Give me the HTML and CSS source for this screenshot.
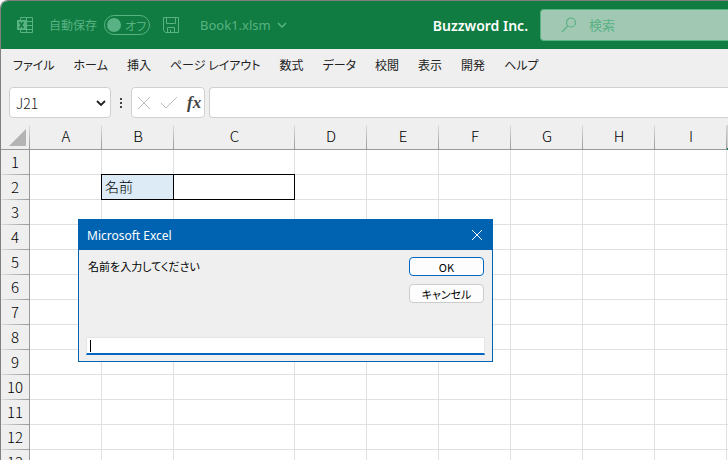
FILE: index.html
```html
<!DOCTYPE html>
<html lang="ja">
<head>
  <meta charset="UTF-8">
  <meta name="viewport" content="width=device-width, initial-scale=1.0">
  <title>Book1.xlsm</title>
  <link rel="stylesheet" href="styles.css">
</head>
<body>
  <div class="window">
    <header class="titlebar">
      <svg class="app-icon" width="18" height="18" viewBox="0 0 18 18" fill="none" stroke="currentColor">
        <path d="M4.500 4V1.500H16.500V16.500H4.500V14M10.500 1.500V16.500M4.500 5.500H16.500M10.500 9.500H16.500M4.500 13.500H16.500" />
        <rect x="1" y="4" width="9" height="10" fill="currentColor" stroke="none" />
        <path d="M3.500 6L7.500 12M7.500 6L3.500 12" stroke="#107c41" stroke-width="1.600" />
      </svg>
      <span class="autosave">自動保存</span>
      <button class="toggle"><span class="knob"></span>オフ</button>
      <button class="save" aria-label="上書き保存">
        <svg width="18" height="18" viewBox="0 0 18 18" fill="none" stroke="currentColor">
          <path d="M1.500 1.500H16.500V16.500H3.500L1.500 14.500ZM4.500 1.500V7.500H13.500V1.500M5.500 16.500V11.500H12.500V16.500M8.500 16.500V14" />
        </svg>
      </button>
      <button class="file-name">Book1.xlsm
        <svg width="10" height="6" viewBox="0 0 10 6" fill="none" stroke="currentColor" stroke-width="1.500">
          <path d="M1 1L5 5L9 1" />
        </svg>
      </button>
      <span class="company">Buzzword Inc.</span>
      <label class="search">
        <svg width="16" height="16" viewBox="0 0 16 16" fill="none" stroke="currentColor" stroke-width="1.200">
          <circle cx="10" cy="5.500" r="4.500" />
          <path d="M6.800 8.800L1 15" />
        </svg>
        <input type="text" placeholder="検索" aria-label="検索">
      </label>
    </header>

    <nav class="menu">
      <button>ファイル</button>
      <button>ホーム</button>
      <button>挿入</button>
      <button>ページ レイアウト</button>
      <button>数式</button>
      <button>データ</button>
      <button>校閲</button>
      <button>表示</button>
      <button>開発</button>
      <button>ヘルプ</button>
    </nav>

    <div class="formula-bar">
      <div class="name-box">
        <select aria-label="名前ボックス">
          <option>J21</option>
        </select>
        <svg width="10" height="6" viewBox="0 0 10 6" fill="none" stroke="#222" stroke-width="1.800">
          <path d="M1 1L5 5L9 1" />
        </svg>
      </div>
      <svg class="dots" width="4" height="12" viewBox="0 0 4 12" fill="#444">
        <path d="M1 1h2v2H1zM1 5h2v2H1zM1 9h2v2H1z" />
      </svg>
      <div class="formula-tools">
        <button aria-label="キャンセル">
          <svg width="14" height="14" viewBox="0 0 14 14" fill="none" stroke="#bbb">
            <path d="M1 1L13 13M13 1L1 13" />
          </svg>
        </button>
        <button aria-label="入力">
          <svg width="18" height="14" viewBox="0 0 18 14" fill="none" stroke="#bbb">
            <path d="M1 7L6 12L17 1" />
          </svg>
        </button>
        <button class="fx" aria-label="関数の挿入">fx</button>
      </div>
      <input class="formula" type="text" aria-label="数式バー">
    </div>

    <main class="sheet">
      <table>
        <colgroup>
          <col class="row-head">
          <col><col>
          <col class="wide">
          <col><col><col><col><col><col><col>
        </colgroup>
        <thead>
          <tr>
            <th class="corner"><svg width="17" height="17" viewBox="0 0 17 17" fill="#b4b4b4"><path d="M17 0V17H0Z" /></svg></th>
            <th>A</th><th>B</th><th>C</th><th>D</th><th>E</th><th>F</th><th>G</th><th>H</th><th>I</th><th class="selected"></th>
          </tr>
        </thead>
        <tbody>
          <tr><th>1</th><td></td><td></td><td></td><td></td><td></td><td></td><td></td><td></td><td></td><td></td></tr>
          <tr><th>2</th><td></td><td class="boxed label">名前</td><td class="boxed"></td><td></td><td></td><td></td><td></td><td></td><td></td><td></td></tr>
          <tr><th>3</th><td></td><td></td><td></td><td></td><td></td><td></td><td></td><td></td><td></td><td></td></tr>
          <tr><th>4</th><td></td><td></td><td></td><td></td><td></td><td></td><td></td><td></td><td></td><td></td></tr>
          <tr><th>5</th><td></td><td></td><td></td><td></td><td></td><td></td><td></td><td></td><td></td><td></td></tr>
          <tr><th>6</th><td></td><td></td><td></td><td></td><td></td><td></td><td></td><td></td><td></td><td></td></tr>
          <tr><th>7</th><td></td><td></td><td></td><td></td><td></td><td></td><td></td><td></td><td></td><td></td></tr>
          <tr><th>8</th><td></td><td></td><td></td><td></td><td></td><td></td><td></td><td></td><td></td><td></td></tr>
          <tr><th>9</th><td></td><td></td><td></td><td></td><td></td><td></td><td></td><td></td><td></td><td></td></tr>
          <tr><th>10</th><td></td><td></td><td></td><td></td><td></td><td></td><td></td><td></td><td></td><td></td></tr>
          <tr><th>11</th><td></td><td></td><td></td><td></td><td></td><td></td><td></td><td></td><td></td><td></td></tr>
          <tr><th>12</th><td></td><td></td><td></td><td></td><td></td><td></td><td></td><td></td><td></td><td></td></tr>
          <tr><th>13</th><td></td><td></td><td></td><td></td><td></td><td></td><td></td><td></td><td></td><td></td></tr>
        </tbody>
      </table>
    </main>

    <form class="dialog" role="dialog" aria-label="Microsoft Excel">
      <div class="dialog-title">
        <span>Microsoft Excel</span>
        <button type="button" aria-label="閉じる">
          <svg width="12" height="12" viewBox="0 0 12 12" fill="none" stroke="#fff">
            <path d="M1 1L11 11M11 1L1 11" />
          </svg>
        </button>
      </div>
      <div class="dialog-body">
        <div class="dialog-top">
          <label for="answer">名前を入力してください</label>
          <div class="dialog-buttons">
            <button type="button" class="default">OK</button>
            <button type="button">キャンセル</button>
          </div>
        </div>
        <input id="answer" type="text">
      </div>
    </form>
  </div>
</body>
</html>
```

FILE: styles.css
```css
* {
  box-sizing: border-box;
}

body {
  margin: 0;
  height: 100vh;
  overflow: hidden;
  background: #fff;
  font-family: "Noto Sans", "Noto Sans CJK JP", sans-serif;
  font-size: 13px;
  color: #222;
}

button, input, select {
  margin: 0;
  padding: 0;
  border: none;
  background: none;
  font: inherit;
  color: inherit;
  outline: none;
}

svg {
  display: block;
  flex: none;
}

.window {
  position: relative;
  display: flex;
  flex-direction: column;
  height: 100vh;
  overflow: hidden;
  border-top: 1px solid #808080;
  border-left: 1px solid #808080;
  border-top-left-radius: 8px;
  background: #efefef;
}

/* title bar */
.titlebar {
  display: flex;
  flex: none;
  align-items: center;
  height: 48px;
  padding-left: 15px;
  background: #107c41;
  color: #58b283;
}

.autosave {
  margin-left: 15px;
  font-size: 12px;
}

.toggle {
  display: flex;
  align-items: center;
  gap: 4px;
  width: 46px;
  height: 20px;
  margin-left: 7px;
  padding-left: 2px;
  border: 1px solid #58b283;
  border-radius: 10px;
  font-family: "Noto Sans CJK JP", sans-serif;
  font-size: 12px;
  font-feature-settings: "palt";
}

.knob {
  width: 14px;
  height: 14px;
  border-radius: 50%;
  background: #58b283;
}

.save {
  margin-left: 12px;
}

.file-name {
  display: flex;
  align-items: center;
  gap: 6px;
  margin-left: 20px;
}

.company {
  margin-left: auto;
  font-weight: 600;
  font-size: 14px;
  color: #fff;
}

.search {
  display: flex;
  align-items: center;
  gap: 12px;
  width: 188px;
  height: 32px;
  margin-left: 12px;
  padding-left: 20px;
  border: 1px solid #58b283;
  border-right: none;
  border-radius: 4px 0 0 4px;
  background: #a0c8b3;
}

.search input {
  flex: 1;
  min-width: 0;
}

.search input::placeholder {
  color: #58b283;
  opacity: 1;
}

/* ribbon tabs */
.menu {
  display: flex;
  flex: none;
  align-items: center;
  gap: 19px;
  height: 33px;
  padding: 0 0 2px 12px;
  font-family: "Noto Sans CJK JP", sans-serif;
  font-size: 12px;
  font-feature-settings: "palt";
}

.menu button {
  white-space: nowrap;
}

/* formula bar */
.formula-bar {
  display: flex;
  flex: none;
  align-items: center;
  padding: 5px 0 7px 8px;
}

.name-box {
  display: grid;
  align-items: center;
  width: 102px;
  height: 31px;
  border: 1px solid #d0d0d0;
  border-radius: 4px;
  background: #fff;
}

.name-box select {
  grid-area: 1 / 1;
  height: 29px;
  padding-left: 6px;
  appearance: none;
  font-family: "Noto Sans CJK JP", sans-serif;
  font-weight: 300;
  font-size: 14px;
}

.name-box svg {
  grid-area: 1 / 1;
  justify-self: end;
  margin-right: 4px;
  pointer-events: none;
}

.dots {
  margin: 0 8px;
}

.formula-tools {
  display: flex;
  align-items: center;
  gap: 9px;
  width: 74px;
  height: 31px;
  padding-left: 5px;
  border: 1px solid #d0d0d0;
  border-radius: 4px;
  background: #fff;
}

.fx {
  font-family: "Liberation Serif", serif;
  font-style: italic;
  font-weight: bold;
  font-size: 17px;
  line-height: 20px;
  color: #444;
}

.formula {
  flex: 1;
  min-width: 0;
  height: 31px;
  margin-left: 4px;
  padding: 0 8px;
  border: 1px solid #d0d0d0;
  border-right: none;
  border-radius: 4px 0 0 4px;
  background: #fff;
}

/* sheet */
.sheet {
  flex: 1;
  min-height: 0;
  overflow: hidden;
  background: #fff;
}

table {
  width: 798px;
  table-layout: fixed;
  border-collapse: separate;
  border-spacing: 0;
  font-family: "Noto Sans CJK JP", sans-serif;
  font-weight: 300;
  font-size: 15px;
  line-height: 22px;
  color: #000;
}

col {
  width: 72px;
}

col.row-head {
  width: 29px;
}

col.wide {
  width: 121px;
}

th, td {
  height: 25px;
  padding: 0 0 2px;
}

th {
  font-weight: inherit;
  text-align: center;
}

thead th {
  border-bottom: 1px solid #999;
  background: linear-gradient(#ddd, #999) right / 1px 100% no-repeat #efefef;
}

thead th.selected {
  border-bottom: 2px solid #107c41;
  background: #d2d2d2;
}

.corner svg {
  margin: 2px 0 0 8px;
}

tbody th {
  border-right: 1px solid #999;
  background: linear-gradient(to right, #ddd, #999) bottom / 100% 1px no-repeat #efefef;
}

td {
  border-right: 1px solid #e0e0e0;
  border-bottom: 1px solid #e0e0e0;
}

td.boxed {
  position: relative;
  border-color: #000;
  box-shadow: -1px -1px 0 #000, 0 -1px 0 #000, -1px 0 0 #000;
  background: #fff;
}

td.label {
  padding-left: 3px;
  background: #ddebf7;
  font-size: 14px;
}

/* input box */
.dialog {
  position: absolute;
  top: 218px;
  left: 77px;
  width: 415px;
  border: 1px solid #0063b1;
  background: #efefef;
  font-size: 11px;
  color: #000;
}

.dialog-title {
  display: flex;
  align-items: center;
  justify-content: space-between;
  height: 30px;
  padding: 0 9px 0 8px;
  background: #0063b1;
  font-size: 12px;
  color: #fff;
}

.dialog-body {
  padding: 7px 7px 6px;
}

.dialog-top {
  display: flex;
  justify-content: space-between;
  height: 80px;
  padding: 0 1px 0 2px;
  font-family: "Noto Sans CJK JP", sans-serif;
  font-feature-settings: "palt";
}

.dialog-top label {
  line-height: 18px;
}

.dialog-buttons {
  display: flex;
  flex-direction: column;
  gap: 8px;
}

.dialog-buttons button {
  width: 75px;
  height: 19px;
  border: 1px solid #ccc;
  border-radius: 4px;
  background: #fdfdfd;
  line-height: 16px;
}

.dialog-buttons .default {
  border-color: #0067c0;
}

.dialog-body input {
  display: block;
  width: 100%;
  height: 18px;
  padding: 0 4px;
  border: 1px solid #e5e5e5;
  border-bottom: 2px solid #0067c0;
  /* caret */
  background: linear-gradient(#000, #000) 3px center / 1px 12px no-repeat #fff;
}
```
